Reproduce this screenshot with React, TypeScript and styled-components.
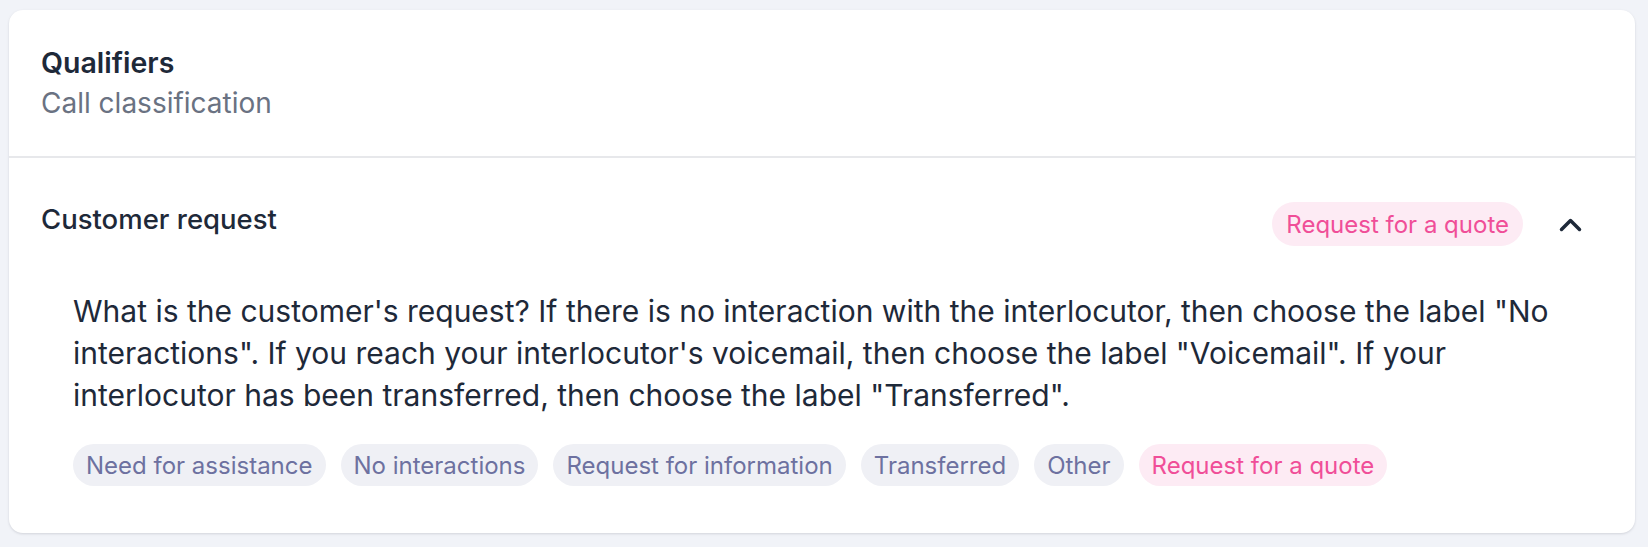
import React from "react";
import styled, { createGlobalStyle } from "styled-components";

const GlobalStyle = createGlobalStyle`
  html, body {
    margin: 0;
    padding: 0;
    background: #f1f3f8;
    font-family: Inter, "Noto Sans", "Liberation Sans", sans-serif;
    -webkit-font-smoothing: antialiased;
  }
  * { box-sizing: border-box; }
`;

const Page = styled.div`
  padding: 10px 13px 14px 9px;
`;

const Card = styled.section`
  background: #ffffff;
  border-radius: 14px;
  box-shadow: 0 1px 3px rgba(15, 23, 42, 0.1), 0 1px 2px rgba(15, 23, 42, 0.04);
  overflow: hidden;
`;

const CardHeader = styled.header`
  padding: 33px 32px 31px 32px;
  border-bottom: 2px solid #e7e8eb;
`;

const Title = styled.h2`
  margin: 0;
  font-size: 28.5px;
  line-height: 39px;
  font-weight: 600;
  color: #1e2939;
`;

const Subtitle = styled.p`
  margin: 0;
  font-size: 28px;
  line-height: 43px;
  font-weight: 400;
  color: #6a7282;
`;

const Section = styled.div`
  padding: 44px 53px 47px 32px;
`;

const SectionHead = styled.div`
  display: flex;
  align-items: flex-start;
  justify-content: space-between;
  height: 44px;
`;

const SectionTitle = styled.h3`
  margin: 0;
  font-size: 27.5px;
  line-height: 34px;
  font-weight: 500;
  color: #1e2939;
`;

const HeadRight = styled.div`
  display: flex;
  align-items: center;
  gap: 36px;
  height: 44px;
`;

const Chip = styled.span<{ $active?: boolean }>`
  display: inline-flex;
  align-items: center;
  height: 42px;
  padding: 0 13px;
  border-radius: 999px;
  font-size: 24px;
  font-weight: 400;
  white-space: nowrap;
  background: ${(p) => (p.$active ? "#fdebf4" : "#eff0f5")};
  color: ${(p) => (p.$active ? "#f04e98" : "#6d71a0")};
`;

const Badge = styled(Chip)`
  height: 44px;
  padding: 0 14px;
`;

const ToggleButton = styled.button`
  display: flex;
  align-items: center;
  justify-content: center;
  width: 23px;
  height: 44px;
  padding: 0;
  border: 0;
  background: transparent;
  cursor: pointer;
`;

const Body = styled.div`
  padding: 44px 0 0 32px;
`;

const Question = styled.p`
  margin: 0;
  font-size: 30px;
  line-height: 42px;
  color: #1e2939;
`;

const ChipList = styled.div`
  display: flex;
  flex-wrap: wrap;
  gap: 15px;
  margin-top: 28px;
`;

const options = [
  "Need for assistance",
  "No interactions",
  "Request for information",
  "Transferred",
  "Other",
  "Request for a quote",
];

const selected = "Request for a quote";

export default function App() {
  return (
    <>
      <GlobalStyle />
      <Page>
        <Card>
          <CardHeader>
            <Title>Qualifiers</Title>
            <Subtitle>Call classification</Subtitle>
          </CardHeader>
          <Section>
            <SectionHead>
              <SectionTitle>Customer request</SectionTitle>
              <HeadRight>
                <Badge $active>{selected}</Badge>
                <ToggleButton aria-label="Collapse">
                  <svg width="23" height="15" viewBox="0 0 23 15" fill="none">
                    <polyline
                      points="2.5,12.5 11.5,3.5 20.5,12.5"
                      stroke="#1e2939"
                      strokeWidth="3.5"
                      strokeLinecap="round"
                      strokeLinejoin="round"
                    />
                  </svg>
                </ToggleButton>
              </HeadRight>
            </SectionHead>
            <Body>
              <Question>
                What is the customer's request? If there is no interaction with the interlocutor, then choose the label "No interactions". If you reach your interlocutor's voicemail, then choose the label "Voicemail". If your interlocutor has been transferred, then choose the label "Transferred".
              </Question>
              <ChipList>
                {options.map((o) => (
                  <Chip key={o} $active={o === selected}>
                    {o}
                  </Chip>
                ))}
              </ChipList>
            </Body>
          </Section>
        </Card>
      </Page>
    </>
  );
}
